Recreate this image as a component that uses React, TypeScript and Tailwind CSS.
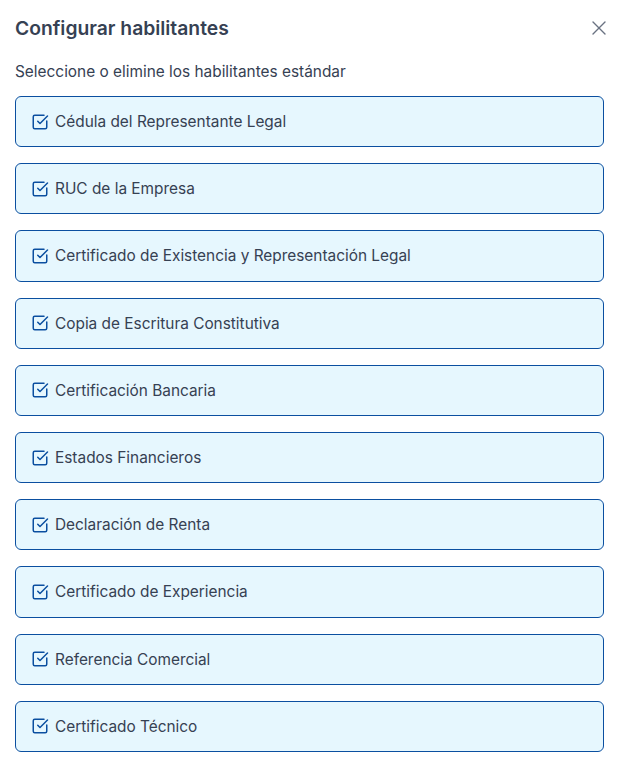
import { X, SquareCheckBig } from 'lucide-react';

const HABILITANTES = [
  'Cédula del Representante Legal',
  'RUC de la Empresa',
  'Certificado de Existencia y Representación Legal',
  'Copia de Escritura Constitutiva',
  'Certificación Bancaria',
  'Estados Financieros',
  'Declaración de Renta',
  'Certificado de Experiencia',
  'Referencia Comercial',
  'Certificado Técnico',
];

export default function App() {
  return (
    <div className="min-h-screen bg-white pl-[15px] pr-[13px] pt-[14px] font-['Inter',sans-serif]">
      <div className="flex items-center justify-between">
        <h2 className="text-[19.3px] font-semibold text-gray-700">Configurar habilitantes</h2>
        <button className="mr-[-7px] text-gray-500">
          <X className="h-6 w-6" strokeWidth={1.4} />
        </button>
      </div>

      <p className="mt-[17px] text-[15.4px] text-gray-700">Seleccione o elimine los habilitantes estándar</p>

      {/* Lista de habilitantes */}
      <div className="mt-[13px] flex flex-col gap-4">
        {HABILITANTES.map((h) => (
          <div
            key={h}
            className="flex h-[51.2px] items-center gap-[6px] rounded-md border border-[#0b4fa0] bg-[#e6f7fe] pl-[15px]"
          >
            <SquareCheckBig className="h-[18px] w-[18px] text-[#0b4fa0]" strokeWidth={2} />
            <span className="text-[15.4px] text-gray-700">{h}</span>
          </div>
        ))}
      </div>
    </div>
  );
}
